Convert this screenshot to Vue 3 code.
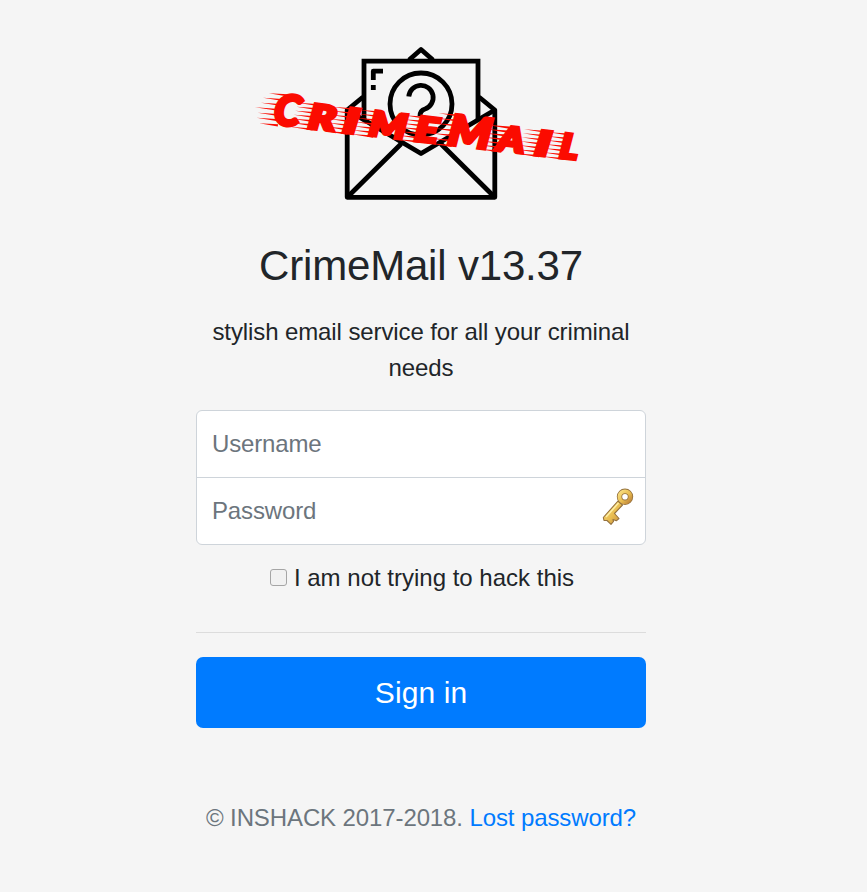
<script setup>
import { ref } from 'vue'

const username = ref('')
const password = ref('')
const notHacking = ref(false)

// Wordmark letters: x offset, size and rough width along the tilted baseline
const letters = [
  { c: 'C', x: 1, size: 42, w: 26 },
  { c: 'R', x: 36, size: 34, w: 27 },
  { c: 'I', x: 71, size: 34, w: 15 },
  { c: 'M', x: 97, size: 34, w: 37 },
  { c: 'E', x: 143, size: 34, w: 23 },
  { c: 'M', x: 176, size: 42, w: 43 },
  { c: 'A', x: 226, size: 34, w: 27 },
  { c: 'I', x: 264, size: 34, w: 15 },
  { c: 'L', x: 289, size: 34, w: 18 },
]

// Tapered speed lines trailing to the left of every letter
const streaks = letters.flatMap((l, i) => {
  const count = 7
  const height = l.size * 0.76
  return Array.from({ length: count }, (_, n) => {
    const y = 0.2 - (n * (height - 1)) / (count - 1)
    const right = l.x + 5 - y * 0.2
    const len = i === 0 ? 26 - Math.abs(n - 3) * 2.4 + (n % 2) * 2 : 23
    return `M${right - len} ${y}L${right} ${y - 1.1}V${y + 1.1}Z`
  })
}).join('')
</script>

<template>
  <main class="page">
    <form class="signin" @submit.prevent>
      <svg class="logo" viewBox="246 35 350 175" width="350" height="175" aria-hidden="true">
        <g fill="none" stroke="#000" stroke-width="4.8" stroke-linejoin="round">
          <path d="M409 60 421 49.5 433 60" />
          <path d="M364 119V61.2H478V119" stroke-linejoin="miter" />
          <path d="M363 97 347.2 110V197.3H494.8V110L479 97" />
          <path d="M347.2 110 421 153.5 494.8 110M348 196.5 401 144M494 196.5 441 144" />
          <circle cx="421" cy="104" r="31" />
          <path d="M408.8 96.5A12.2 12.2 0 1 1 425 109Q420 110.5 420 116" />
          <path d="M373.3 80V71.2H383M373.3 85V90" />
        </g>
        <g transform="translate(272 124.5) rotate(6.7)" fill="#fb0b00">
          <path :d="streaks" />
          <text
            v-for="(l, i) in letters"
            :key="i"
            class="letter"
            :x="l.x"
            y="-0.8"
            :font-size="l.size"
            :textLength="l.w"
            lengthAdjust="spacingAndGlyphs"
          >{{ l.c }}</text>
        </g>
      </svg>

      <h1>CrimeMail v13.37</h1>
      <p class="tagline">stylish email service for all your criminal needs</p>

      <div class="fields">
        <input v-model="username" type="text" placeholder="Username" />
        <div class="password">
          <input v-model="password" type="password" placeholder="Password" />
          <svg class="key" viewBox="0 0 34 39" width="34" height="39" aria-hidden="true">
            <defs>
              <linearGradient id="gold" x1="0" y1="0" x2="1" y2="1">
                <stop offset="0" stop-color="#f8df83" />
                <stop offset="0.55" stop-color="#e9bd50" />
                <stop offset="1" stop-color="#bd833a" />
              </linearGradient>
            </defs>
            <path
              d="M17 14 2.3 30.5 3 33.5 6 33.5 10 37.3 12.5 34.5 12 32.5 15.3 33.8 18 31.5 13.5 26.5 21.5 18Z"
              fill="url(#gold)" stroke="#94713e" stroke-width="1.1" stroke-linejoin="round"
            />
            <path d="M17.5 16 5 30" stroke="#fff0a5" stroke-width="1.5" />
            <circle cx="24" cy="9.8" r="5.5" fill="none" stroke="#94713e" stroke-width="5.4" />
            <circle cx="24" cy="9.8" r="5.5" fill="none" stroke="url(#gold)" stroke-width="3.8" />
          </svg>
        </div>
      </div>

      <label class="confirm">
        <input v-model="notHacking" type="checkbox" />
        <span>I am not trying to hack this</span>
      </label>
      <hr />
      <button type="submit">Sign in</button>
      <p class="footer">© INSHACK 2017-2018. <a href="#">Lost password?</a></p>
    </form>
  </main>
</template>

<style>
body {
  background: #f5f5f5;
}
</style>

<style scoped>
.page {
  box-sizing: border-box;
  display: flex;
  justify-content: center;
  height: 892px;
  padding: 35px 25px 0 0;
  font: 24px/36px "Liberation Sans", Arial, sans-serif;
  color: #212529;
  background: #f5f5f5;
}
.signin {
  display: flex;
  flex-direction: column;
  width: 450px;
  text-align: center;
}
.logo {
  align-self: center;
  flex: none;
}
.letter {
  font-family: Lato, sans-serif;
  font-weight: 900;
  font-style: italic;
  stroke: #fb0b00;
  stroke-width: 3.6px;
}
h1 {
  margin: 31px 0 0;
  font-size: 42px;
  font-weight: 400;
  line-height: 50px;
  letter-spacing: -0.18px;
}
.tagline {
  margin: 23px 0 24px;
  letter-spacing: -0.1px;
}
.fields {
  box-sizing: border-box;
  height: 135px;
  border: 1px solid #ced4da;
  border-radius: 6px;
  background: #fff;
  overflow: hidden;
}
.fields input {
  box-sizing: border-box;
  display: block;
  width: 100%;
  height: 66px;
  margin: 0;
  padding: 0 15px;
  border: 0;
  outline: 0;
  background: transparent;
  color: #495057;
  font: inherit;
  letter-spacing: -0.15px;
}
.fields input::placeholder {
  color: #6c757d;
  opacity: 1;
}
.password {
  position: relative;
  border-top: 1px solid #ced4da;
}
.key {
  position: absolute;
  top: 9px;
  right: 10px;
}
.confirm {
  display: flex;
  align-items: center;
  justify-content: center;
  gap: 7px;
  margin-top: 15px;
  padding-left: 2px;
}
.confirm input {
  appearance: none;
  box-sizing: border-box;
  width: 17px;
  height: 17px;
  margin: 0 0 2px;
  border: 1px solid #a5a5a5;
  border-radius: 3px;
  background: #f1f1f1;
}
.confirm input:checked {
  background: #007bff;
}
hr {
  width: 100%;
  margin: 36px 0 24px;
  border: 0;
  border-top: 1px solid #dcdcdc;
}
button {
  height: 71px;
  padding: 0;
  border: 0;
  border-radius: 7px;
  background: #007bff;
  color: #fff;
  font: 30px/45px "Liberation Sans", Arial, sans-serif;
  letter-spacing: 0.1px;
}
.footer {
  margin: 72px 0 0;
  color: #6c757d;
  white-space: nowrap;
  letter-spacing: -0.11px;
}
.footer a {
  color: #007bff;
  text-decoration: none;
}
</style>
